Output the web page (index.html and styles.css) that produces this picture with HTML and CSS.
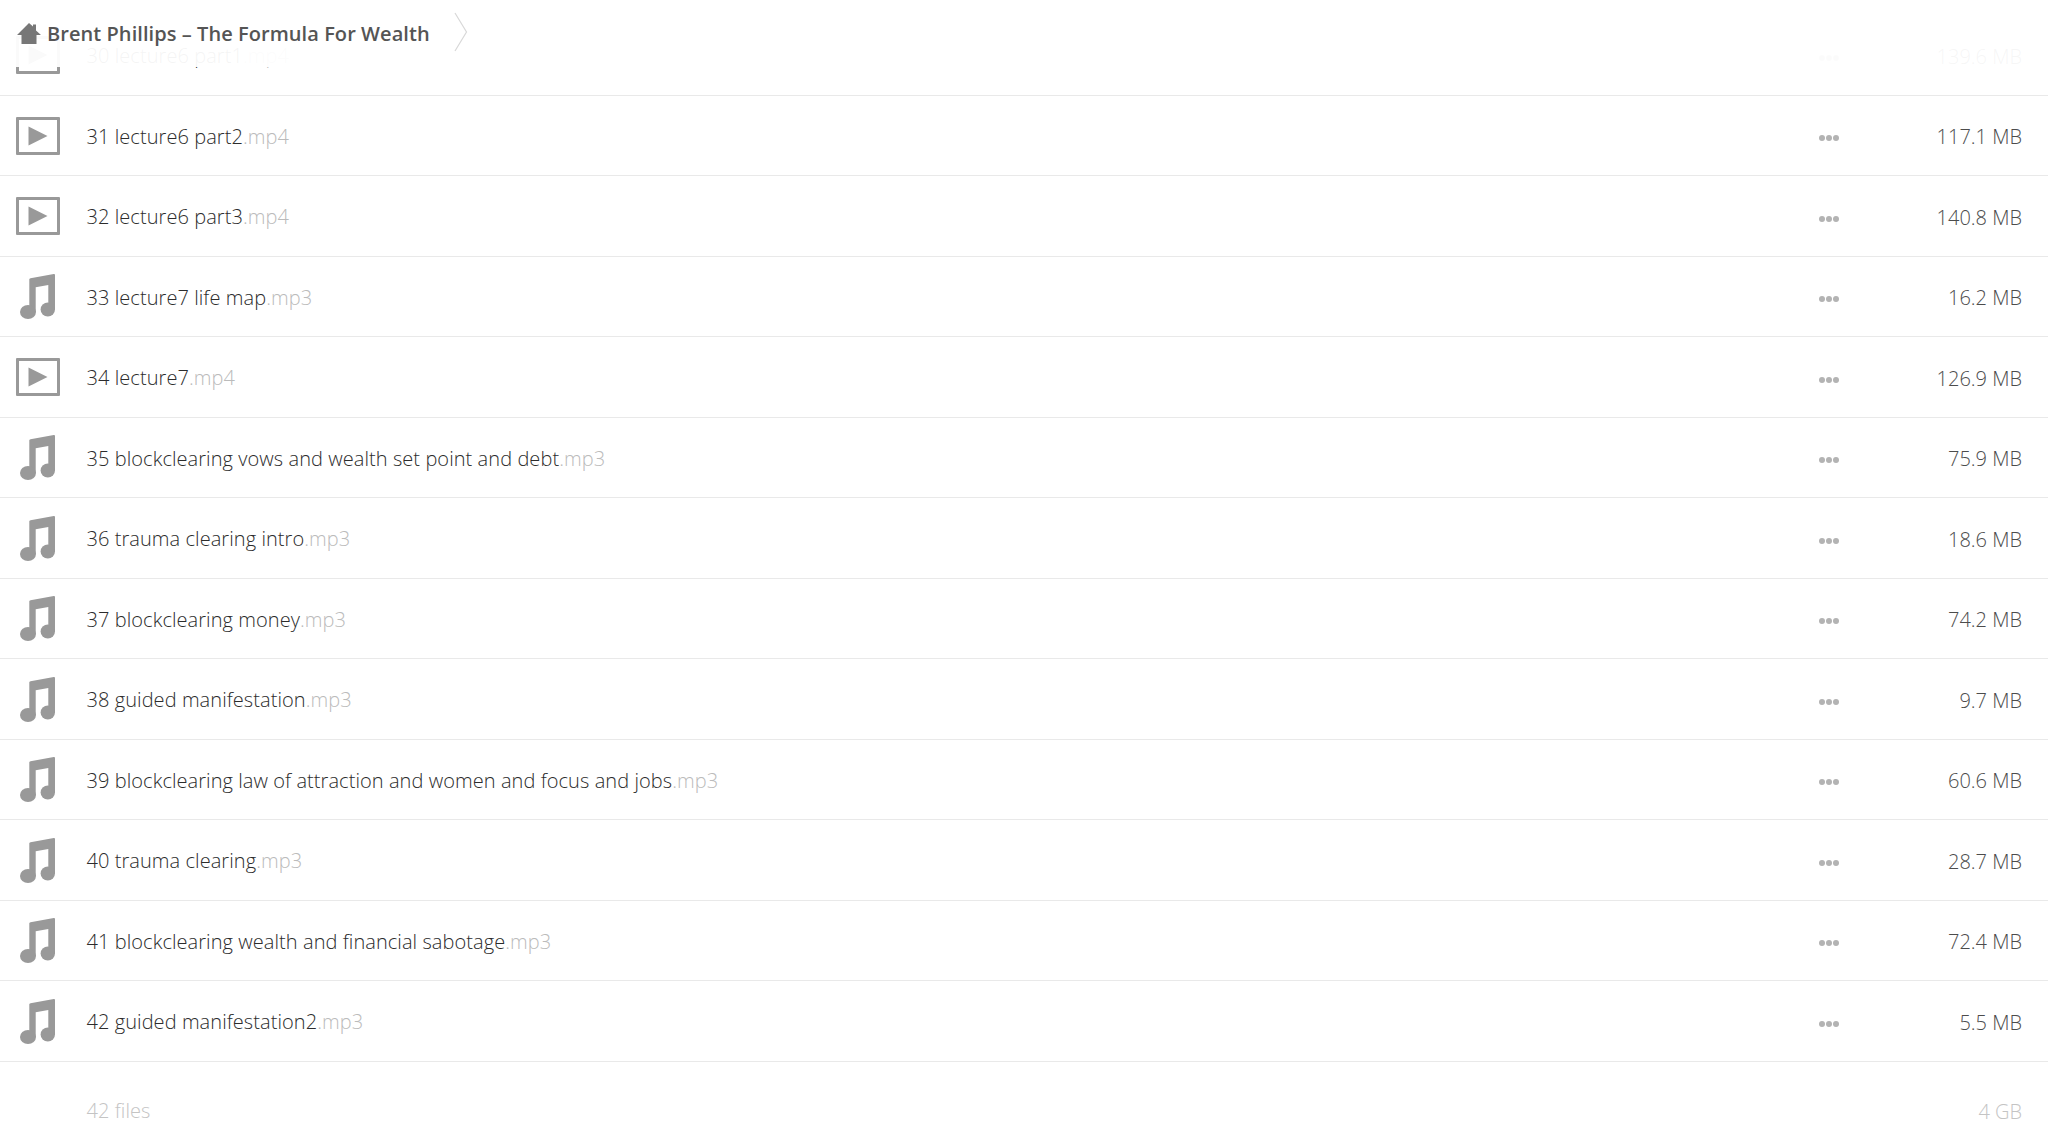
FILE: index.html
```html
<!DOCTYPE html>
<html lang="en">
<head>
<meta charset="utf-8">
<title>Brent Phillips – The Formula For Wealth</title>
<link rel="stylesheet" href="styles.css">
</head>
<body>
<svg class="defs" width="0" height="0" aria-hidden="true">
  <symbol id="video" viewBox="0 0 44 38">
    <path fill-rule="evenodd" d="M1 0h42a1 1 0 0 1 1 1v36a1 1 0 0 1-1 1H1a1 1 0 0 1-1-1V1a1 1 0 0 1 1-1zM3 3v32h38V3z"/>
    <path d="M12.500 9.500v19L31.500 19z"/>
  </symbol>
  <symbol id="music" viewBox="0 0 35 45">
    <path d="M9.300 5.500c0-.7.500-1.200 1.200-1.300L33.800.1c.7-.1 1.200.4 1.200 1.100v34.300h-6.700V11l-12.600 2.300V38H9.300z"/>
    <ellipse cx="8" cy="38" rx="8" ry="7"/>
    <ellipse cx="27.800" cy="35.500" rx="7.200" ry="7"/>
  </symbol>
</svg>
<header class="crumbs">
  <svg class="home" viewBox="0 0 24 21"><path d="M12 0l4 3.500V1.500h3v6L24 12h-4.500v9h-15v-9H0z"/></svg>
  <span class="crumb">Brent Phillips – The Formula For Wealth</span>
  <svg class="chev" viewBox="0 0 14 40"><path d="M1 1l11.500 19L1 39"/></svg>
</header>
<main class="list">
  <div class="row"><svg class="ic vid"><use href="#video"/></svg><span class="name">30 lecture6 part1<span class="ext">.mp4</span></span><span class="dots"><i></i><i></i><i></i></span><span class="size">139.6 MB</span></div>
  <div class="row"><svg class="ic vid"><use href="#video"/></svg><span class="name">31 lecture6 part2<span class="ext">.mp4</span></span><span class="dots"><i></i><i></i><i></i></span><span class="size">117.1 MB</span></div>
  <div class="row"><svg class="ic vid"><use href="#video"/></svg><span class="name">32 lecture6 part3<span class="ext">.mp4</span></span><span class="dots"><i></i><i></i><i></i></span><span class="size">140.8 MB</span></div>
  <div class="row"><svg class="ic mus"><use href="#music"/></svg><span class="name">33 lecture7 life map<span class="ext">.mp3</span></span><span class="dots"><i></i><i></i><i></i></span><span class="size">16.2 MB</span></div>
  <div class="row"><svg class="ic vid"><use href="#video"/></svg><span class="name">34 lecture7<span class="ext">.mp4</span></span><span class="dots"><i></i><i></i><i></i></span><span class="size">126.9 MB</span></div>
  <div class="row"><svg class="ic mus"><use href="#music"/></svg><span class="name">35 blockclearing vows and wealth set point and debt<span class="ext">.mp3</span></span><span class="dots"><i></i><i></i><i></i></span><span class="size">75.9 MB</span></div>
  <div class="row"><svg class="ic mus"><use href="#music"/></svg><span class="name">36 trauma clearing intro<span class="ext">.mp3</span></span><span class="dots"><i></i><i></i><i></i></span><span class="size">18.6 MB</span></div>
  <div class="row"><svg class="ic mus"><use href="#music"/></svg><span class="name">37 blockclearing money<span class="ext">.mp3</span></span><span class="dots"><i></i><i></i><i></i></span><span class="size">74.2 MB</span></div>
  <div class="row"><svg class="ic mus"><use href="#music"/></svg><span class="name">38 guided manifestation<span class="ext">.mp3</span></span><span class="dots"><i></i><i></i><i></i></span><span class="size">9.7 MB</span></div>
  <div class="row"><svg class="ic mus"><use href="#music"/></svg><span class="name">39 blockclearing law of attraction and women and focus and jobs<span class="ext">.mp3</span></span><span class="dots"><i></i><i></i><i></i></span><span class="size">60.6 MB</span></div>
  <div class="row"><svg class="ic mus"><use href="#music"/></svg><span class="name">40 trauma clearing<span class="ext">.mp3</span></span><span class="dots"><i></i><i></i><i></i></span><span class="size">28.7 MB</span></div>
  <div class="row"><svg class="ic mus"><use href="#music"/></svg><span class="name">41 blockclearing wealth and financial sabotage<span class="ext">.mp3</span></span><span class="dots"><i></i><i></i><i></i></span><span class="size">72.4 MB</span></div>
  <div class="row"><svg class="ic mus"><use href="#music"/></svg><span class="name">42 guided manifestation2<span class="ext">.mp3</span></span><span class="dots"><i></i><i></i><i></i></span><span class="size">5.5 MB</span></div>
  <div class="summary"><span class="name">42 files</span><span class="size">4 GB</span></div>
</main>
</body>
</html>
```
FILE: styles.css
```css
html, body { margin: 0; padding: 0; height: 100%; overflow: hidden; background: #fff; }
body { font-family: "Open Sans", sans-serif; font-weight: 300; font-size: 20px; color: #333; position: relative; }
.defs { position: absolute; }

.crumbs {
  position: absolute; left: 0; top: 0; right: 0; height: 67px; z-index: 2;
  background: rgba(255,255,255,.95);
  display: flex; align-items: center; padding-left: 17px; box-sizing: border-box;
}
.home { width: 24px; height: 21px; fill: #777; margin-top: -1px; }
.crumb { font-weight: 600; font-size: 20px; letter-spacing: .06px; color: #555; margin-left: 6px; }
.chev { width: 14px; height: 40px; margin-left: 24px; margin-top: -3px; fill: none; stroke: #d8d8d8; stroke-width: 1.2; }

.list { padding-top: 15.4px; }
.row {
  height: 80.5px; box-sizing: border-box; border-bottom: 1px solid #e9e9e9;
  display: flex; align-items: center; padding: 1px 26px 0 16px;
}
.ic { flex: none; fill: #999; margin-top: -1px; }
.vid { width: 44px; height: 38px; margin-right: 26.5px; }
.mus { width: 35px; height: 45px; margin-right: 31.5px; margin-left: 4px; }
.name { flex: 1; color: #2c2c2c; letter-spacing: .065px; }
.ext { color: #bbb; }
.dots { display: flex; gap: 1px; width: 22px; margin: 4px 21px 0 0; }
.dots i { width: 6px; height: 6px; border-radius: 50%; background: #b3b3b3; }
.size { width: 160px; text-align: right; color: #4c4c4c; padding-top: 1px; }

.summary { display: flex; padding: 35px 26px 0 86.5px; }
.summary .name, .summary .size { color: #c4c4c4; }
```
